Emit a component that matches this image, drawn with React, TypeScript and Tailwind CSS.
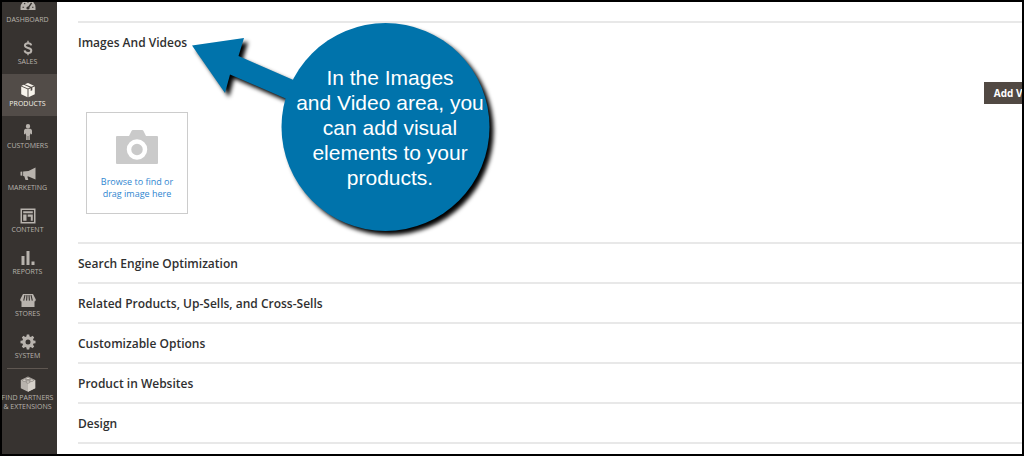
import type { ReactNode } from 'react';

interface NavItem {
    label: string;
    icon: ReactNode;
    active?: boolean;
}

const navItems: NavItem[] = [
    {
        label: 'Dashboard',
        icon: (
            <>
                <path d="M.5 12V9.500a7.500 7.500 0 0 1 15 0V12Z" />
                <g fill="none" stroke="#373330" strokeWidth="1.100">
                    <path d="M2.500 9.200h1.600M4.200 5.200l1 1M8 3.300v1.500M12 9.200h1.500" />
                    <path d="M11.600 4.800 8.200 9.800" strokeWidth="1.400" />
                </g>
                <circle cx="8" cy="10" r="1.600" fill="#373330" />
            </>
        ),
    },
    {
        label: 'Sales',
        icon: (
            <>
                <path
                    d="M11.200 5.400C11 4 9.800 3.200 8 3.200 6.100 3.200 4.900 4.200 4.900 5.500 4.900 8.800 11.300 7 11.300 10.400 11.300 12 10 12.900 8 12.900 6 12.900 4.800 12 4.600 10.400"
                    fill="none"
                    stroke="currentColor"
                    strokeWidth="2"
                />
                <path d="M7.300.8h1.400V3.500H7.300ZM7.300 12.500h1.400v2.700H7.300Z" />
            </>
        ),
    },
    {
        label: 'Products',
        active: true,
        icon: (
            <path d="M8 1 4.800 2.300l6.400 2.500L14 3.700ZM3.800 2.700 1.500 3.700 8 6.400l2-.9ZM1.200 4.600v7.700l6.300 3V7.200ZM8.500 7.200v8.100l6.300-3V4.600l-2.500 1v2.700l-1.600.8V6.300Z" />
        ),
    },
    {
        label: 'Customers',
        icon: (
            <path d="M8 0a2.200 2.200 0 1 1 0 4.400A2.200 2.200 0 0 1 8 0ZM5.600 4.800h4.800q1.500.3 1.600 1.900V10l-1.100.5-.4-1.500-.7 2.500V16H8.300v-4h-.6v4H6.200v-4.500L5.500 9l-.4 1.500L4 10V6.700Q4.100 5.100 5.600 4.800Z" />
        ),
    },
    {
        label: 'Marketing',
        icon: (
            <path d="M15.500 1.500v12l-7-3H7.300l1 3.500H5.500l-1.200-3.800-1.200-.2V5.500l5.400-.6ZM.5 5.800l1.800-.2v4.200L.5 9.500Z" />
        ),
    },
    {
        label: 'Content',
        icon: (
            <path
                fillRule="evenodd"
                d="M.5.500h15v15H.500ZM2 2v12h12V2ZM3.200 3.200h9.600v2H3.200ZM3.200 6.500h3.300v6.300H3.200ZM7.700 6.500h5.100v6.300h-2V8.700H7.700Z"
            />
        ),
    },
    {
        label: 'Reports',
        icon: <path d="M1.500 6h3v9h-3ZM6.500 1h3v14h-3ZM11.500 11.500h3V15h-3Z" />,
    },
    {
        label: 'Stores',
        icon: (
            <>
                <path d="M3 2h10l2.800 5.500Q15.800 9.300 14.500 9.600V15h-13V9.600Q.2 9.300.2 7.500Z" />
                <path
                    d="M5 3 3.700 8.600M7 3l-.4 5.600M9 3l.4 5.600M11 3l1.300 5.600"
                    fill="none"
                    stroke="#373330"
                    strokeWidth="1.100"
                />
            </>
        ),
    },
    {
        label: 'System',
        icon: (
            <path
                fillRule="evenodd"
                d="m6.800.500h2.400l.4 2 1.200.5 1.700-1.200 1.700 1.700L13 5.200l.5 1.200 2 .4v2.400l-2 .4-.5 1.200 1.200 1.700-1.700 1.700-1.700-1.200-1.200.5-.4 2H6.800l-.4-2-1.200-.5-1.700 1.200-1.700-1.700L3 10.800l-.5-1.200-2-.4V6.800l2-.4L3 5.200 1.800 3.500l1.700-1.700L5.200 3l1.200-.5ZM8 5.500A2.500 2.500 0 1 0 8 10.500 2.500 2.500 0 0 0 8 5.500Z"
            />
        ),
    },
];

const sections = [
    'Search Engine Optimization',
    'Related Products, Up-Sells, and Cross-Sells',
    'Customizable Options',
    'Product in Websites',
    'Design',
];

function NavIcon({ children }: { children: ReactNode }) {
    return (
        <svg viewBox="0 0 16 16" className="size-4 shrink-0" fill="currentColor" aria-hidden="true">
            {children}
        </svg>
    );
}

function Sidebar() {
    return (
        <nav className="w-[55px] shrink-0 overflow-hidden bg-[#373330] text-[7px] leading-[9px] text-[#b8b3ad] uppercase">
            {/* The menu is scrolled down a little, so its first entry starts above the edge */}
            <ul className="-mt-3">
                {navItems.map((item) => (
                    <li key={item.label}>
                        <a
                            href="#"
                            className={`flex h-[42px] flex-col items-center gap-px pt-2 pr-1 ${
                                item.active ? 'bg-[#524c48] text-[#f7f3eb]' : ''
                            }`}
                        >
                            <NavIcon>{item.icon}</NavIcon>
                            <span>{item.label}</span>
                        </a>
                    </li>
                ))}
            </ul>
            <div className="ml-[5px] w-[41px] border-t border-[#5f5751]" />
            <a href="#" className="flex flex-col items-center gap-px pt-[7px] pr-1 text-center whitespace-nowrap">
                <NavIcon>
                    <path d="M8 .5.800 4v8.200L8 15.800l7.200-3.600V4Z" />
                    <path d="M8 7.500v8.300l7.200-3.600V4Z" fill="#d6d1ca" />
                    <g fill="#ddd8d1" stroke="#75706b" strokeWidth=".6">
                        <ellipse cx="8" cy="2.500" rx="2" ry="1.100" />
                        <ellipse cx="4.300" cy="4.200" rx="2" ry="1.100" />
                        <ellipse cx="11.700" cy="4.200" rx="2" ry="1.100" />
                        <ellipse cx="8" cy="6" rx="2" ry="1.100" />
                    </g>
                </NavIcon>
                <span>
                    Find Partners
                    <br />& Extensions
                </span>
            </a>
        </nav>
    );
}

function SectionTitle({ children }: { children: ReactNode }) {
    return <h2 className="flex h-[38px] items-center pt-0.5 text-[12px] font-semibold">{children}</h2>;
}

function Callout() {
    return (
        <div className="pointer-events-none absolute top-0 left-[108px] h-[220px] w-[312px]">
            <svg
                viewBox="186 23 312 220"
                className="absolute inset-0 size-full overflow-visible drop-shadow-[4px_4px_2px_rgba(0,0,0,1)]"
                fill="#0073ab"
                aria-hidden="true"
            >
                <path d="M192 45.500 244 38l-5.500 18L298 82l-9 18-59-25.500-5 18.500Z" />
                <circle cx="385.500" cy="127" r="104" />
            </svg>
            <p className="absolute top-[42px] right-2 w-[200px] text-center font-['Liberation_Sans',Arial,sans-serif] text-[21px] leading-[25px] text-white">
                In the Images
                <br />
                and Video area, you
                <br />
                can add visual
                <br />
                elements to your
                <br />
                products.
            </p>
        </div>
    );
}

function ImageUploader() {
    return (
        <label className="ml-2 flex size-[102px] cursor-pointer flex-col items-center border border-[#cccccc] pt-[17px] text-center text-[9px] leading-[12px] text-[#2f86d0]">
            <svg viewBox="0 0 42 34" className="mb-3 h-[34px] w-[42px]" aria-hidden="true">
                <path
                    d="M1 6h12l2.500-5Q16 0 17 0h9q1 0 1.500 1L30 6h11q1 0 1 1v26q0 1-1 1H1q-1 0-1-1V7q0-1 1-1Z"
                    fill="#cacaca"
                />
                <circle cx="21" cy="19.500" r="8" fill="none" stroke="#fff" strokeWidth="4.500" />
            </svg>
            <span>
                Browse to find or
                <br />
                drag image here
            </span>
            <input type="file" accept="image/*" className="sr-only" />
        </label>
    );
}

export default function App() {
    return (
        <div className="flex min-h-screen overflow-hidden border-2 border-black bg-white font-['Open_Sans','Noto_Sans',sans-serif]">
            <Sidebar />
            <main className="min-w-0 flex-1 pt-[19px] pl-[21px] text-[#303030]">
                <section className="relative border-t-2 border-[#e8e8e8]">
                    <SectionTitle>Images And Videos</SectionTitle>
                    <div className="flex justify-end pt-[21px] pb-2">
                        {/* The toolbar is wider than the page and runs off its right side */}
                        <button
                            type="button"
                            className="-mr-8 h-[22px] shrink-0 bg-[#514943] px-[10px] text-[10px] font-bold whitespace-nowrap text-white"
                        >
                            Add Video
                        </button>
                    </div>
                    <div className="pb-7">
                        <ImageUploader />
                    </div>
                    <Callout />
                </section>
                {sections.map((title) => (
                    <section key={title} className="border-t-2 border-[#e8e8e8]">
                        <SectionTitle>{title}</SectionTitle>
                    </section>
                ))}
                <div className="border-t-2 border-[#e8e8e8]" />
            </main>
        </div>
    );
}
